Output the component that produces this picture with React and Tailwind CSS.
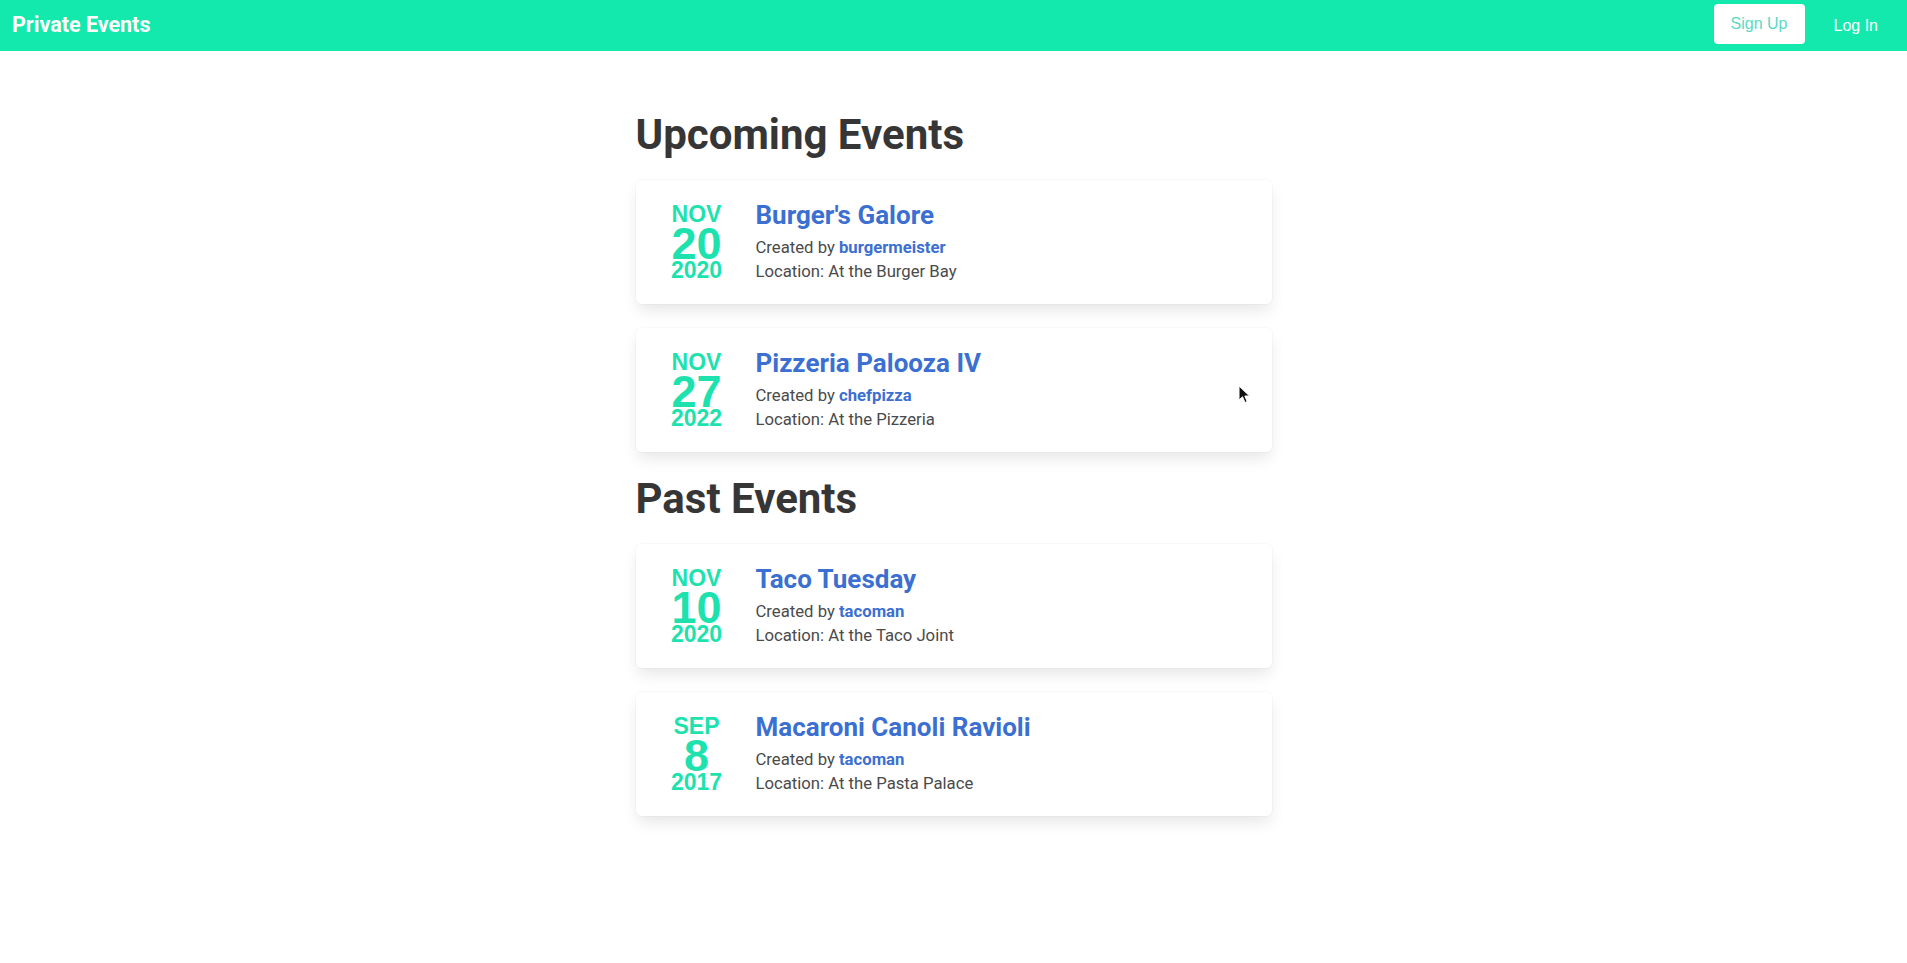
import React from 'react';

const upcoming = [
  { month: 'NOV', day: '20', year: '2020', title: "Burger's Galore", creator: 'burgermeister', location: 'At the Burger Bay' },
  { month: 'NOV', day: '27', year: '2022', title: 'Pizzeria Palooza IV', creator: 'chefpizza', location: 'At the Pizzeria' },
];

const past = [
  { month: 'NOV', day: '10', year: '2020', title: 'Taco Tuesday', creator: 'tacoman', location: 'At the Taco Joint' },
  { month: 'SEP', day: '8', year: '2017', title: 'Macaroni Canoli Ravioli', creator: 'tacoman', location: 'At the Pasta Palace' },
];

const EventCard = ({ event }) => (
  <div className="flex items-start bg-white rounded-md p-5 shadow-[0_8px_16px_-2px_rgba(10,10,10,0.1),0_0_0_1px_rgba(10,10,10,0.02)]">
    <div className="w-[82px] mr-[18px] mt-[3px] flex flex-col items-center text-[#1ee2ad] font-bold font-['Liberation_Sans',Arial,sans-serif]">
      <span className="text-[23px] leading-[22px]">{event.month}</span>
      <span className="text-[45px] leading-[37px]">{event.day}</span>
      <span className="text-[23px] leading-[16px]">{event.year}</span>
    </div>
    <div className="flex flex-col">
      <a href="#" className="text-[26px] leading-[30px] font-bold text-[#3b6fd2]">{event.title}</a>
      <div className="mt-[6px] text-[16.7px] leading-[24px] text-[#4a4a4a]">
        <p>
          Created by <a href="#" className="font-bold text-[#3b6fd2]">{event.creator}</a>
        </p>
        <p>Location: {event.location}</p>
      </div>
    </div>
  </div>
);

const Cursor = () => (
  <svg className="absolute left-[1238px] top-[385px]" width="14" height="20" viewBox="0 0 14 20">
    <path d="M1 1 L1 15 L4.5 11.8 L7 17.5 L9.2 16.5 L6.8 11 L11.5 11 Z" fill="#111" stroke="#fff" strokeWidth="1" strokeLinejoin="round" />
  </svg>
);

const App = () => {
  return (
    <div className="relative min-h-screen bg-white font-['Roboto','Noto_Sans',sans-serif]">
      <nav className="h-[51px] bg-[#14e9ad] flex items-center justify-between">
        <a href="#" className="ml-3 text-[21.5px] font-bold text-white">Private Events</a>
        <div className="flex items-center h-full font-['Liberation_Sans',Arial,sans-serif] text-[16px]">
          <a href="#" className="w-[91px] h-[40px] mb-[3px] flex items-center justify-center bg-white rounded text-[#5cd9c2]">Sign Up</a>
          <a href="#" className="mx-[29px] text-white">Log In</a>
        </div>
      </nav>

      <main className="mx-auto w-[636px] pt-[60px] pb-20">
        <h1 className="text-[42px] leading-[48px] font-bold text-[#363636] mb-[21px]">Upcoming Events</h1>
        <div className="flex flex-col gap-6">
          {upcoming.map((e) => <EventCard key={e.title} event={e} />)}
        </div>

        <h1 className="mt-[23px] text-[42px] leading-[48px] font-bold text-[#363636] mb-[21px]">Past Events</h1>
        <div className="flex flex-col gap-6">
          {past.map((e) => <EventCard key={e.title} event={e} />)}
        </div>
      </main>

      <Cursor />
    </div>
  );
};

export default App;
